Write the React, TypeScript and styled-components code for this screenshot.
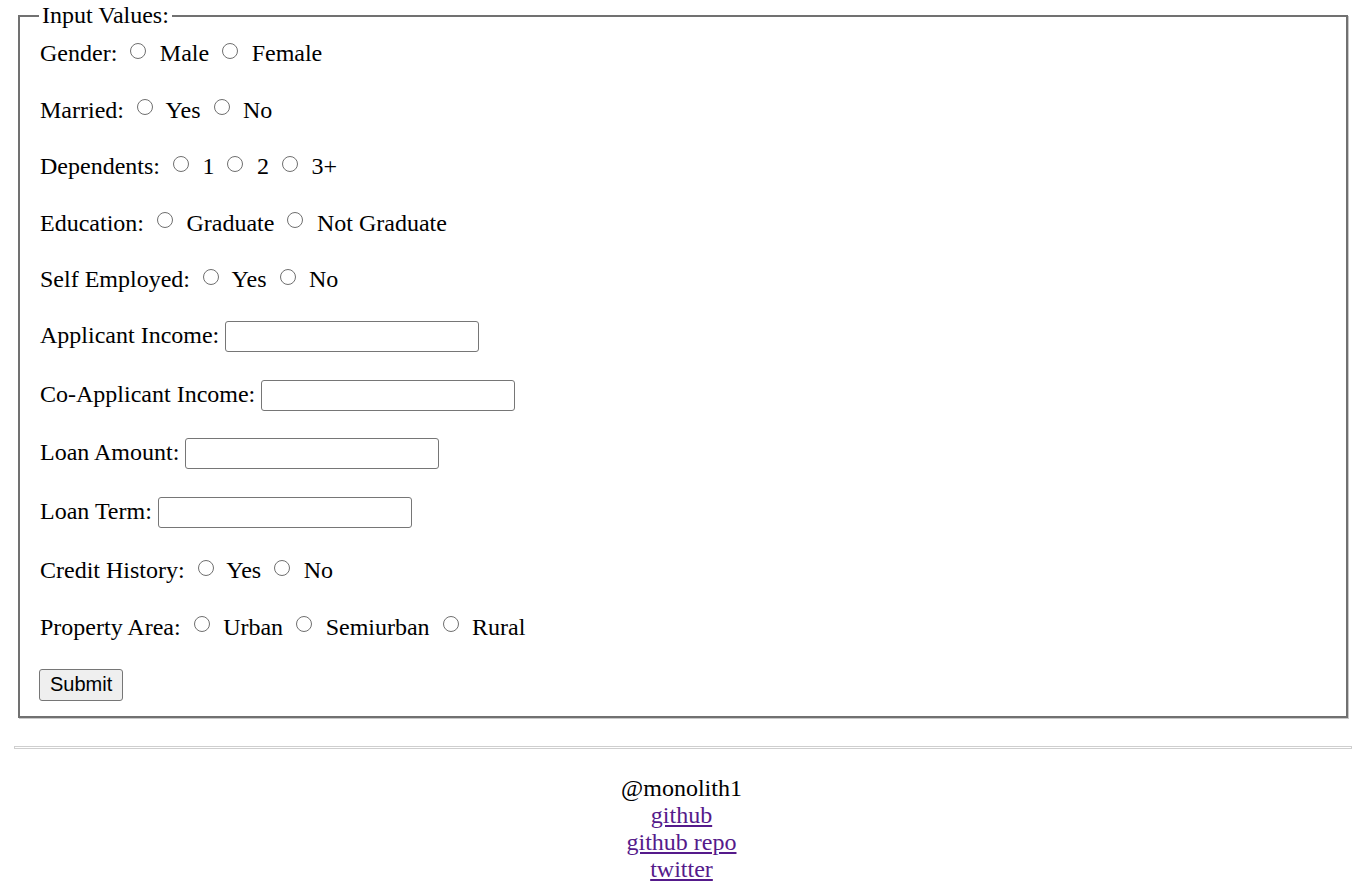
import React from "react";
import styled, { createGlobalStyle } from "styled-components";

const GlobalStyle = createGlobalStyle`
  html, body { background: #ffffff; }
  body {
    margin: 0;
    font-family: "Liberation Serif", "Times New Roman", serif;
    font-size: 24px;
    color: #000000;
  }
`;

const Page = styled.div`
  padding-top: 2px;
`;

const Form = styled.form`
  margin: 0;
`;

const FieldSet = styled.fieldset`
  margin: 0 15px 0 18px;
  padding: 9px 18px 15px 20px;
  border: 2px solid #717171;
  box-shadow: 1px 1px 0 #c9c9c9;
  min-inline-size: 0;
`;

const Legend = styled.legend`
  padding: 0 3px;
  margin-left: -1px;
  font-size: 24px;
`;

const Row = styled.div<{ $last?: boolean }>`
  line-height: normal;
  margin-bottom: ${(p) => (p.$last ? "0" : "27.6px")};
  white-space: nowrap;
`;

const Radio = styled.input.attrs({ type: "radio" })`
  appearance: none;
  -webkit-appearance: none;
  box-sizing: border-box;
  width: 16px;
  height: 16px;
  margin: 4.5px 7.5px 2.5px 7px;
  border: 1px solid #6f6f6f;
  border-radius: 50%;
  background: #ffffff;
  vertical-align: baseline;
`;

const TextInput = styled.input.attrs({ type: "text" })`
  box-sizing: border-box;
  width: 254px;
  height: 31px;
  margin: 0;
  padding: 1px 3px;
  border: 1px solid #767676;
  border-radius: 3px;
  font-family: "Liberation Sans", Arial, sans-serif;
  font-size: 20px;
  background: #ffffff;
  vertical-align: baseline;
`;

const SubmitButton = styled.button`
  box-sizing: border-box;
  height: 32px;
  margin: 0 0 0 -1px;
  padding: 0 10px;
  border: 1px solid #767676;
  border-radius: 3px;
  background: #efefef;
  color: #000000;
  font-family: "Liberation Sans", Arial, sans-serif;
  font-size: 20px;
  vertical-align: baseline;
`;

const Divider = styled.hr`
  margin: 28px 11px 0 14px;
  height: 1px;
  border: 1px solid #cfcfcf;
  background: #ffffff;
`;

const Footer = styled.div`
  margin-top: 26px;
  text-align: center;
  line-height: normal;
`;

const Handle = styled.div``;

const FooterLink = styled.a`
  display: block;
  width: fit-content;
  margin: 0 auto;
  color: #551a8b;
  text-decoration: underline;
`;

type RadioRow = { label: string; name: string; options: string[] };

const RadioField: React.FC<RadioRow> = ({ label, name, options }) => (
  <Row>
    {label}:{" "}
    {options.map((o, i) => (
      <React.Fragment key={o}>
        <Radio name={name} value={o} /> {o}
        {i < options.length - 1 ? " " : ""}
      </React.Fragment>
    ))}
  </Row>
);

const TextField: React.FC<{ label: string; name: string }> = ({ label, name }) => (
  <Row>
    {label}: <TextInput name={name} />
  </Row>
);

export default function App() {
  return (
    <Page>
      <GlobalStyle />
      <Form onSubmit={(e) => e.preventDefault()}>
        <FieldSet>
          <Legend>Input Values:</Legend>
          <RadioField label="Gender" name="gender" options={["Male", "Female"]} />
          <RadioField label="Married" name="married" options={["Yes", "No"]} />
          <RadioField label="Dependents" name="dependents" options={["1", "2", "3+"]} />
          <RadioField label="Education" name="education" options={["Graduate", "Not Graduate"]} />
          <RadioField label="Self Employed" name="self" options={["Yes", "No"]} />
          <TextField label="Applicant Income" name="ai" />
          <TextField label="Co-Applicant Income" name="cai" />
          <TextField label="Loan Amount" name="la" />
          <TextField label="Loan Term" name="lt" />
          <RadioField label="Credit History" name="credit" options={["Yes", "No"]} />
          <RadioField label="Property Area" name="area" options={["Urban", "Semiurban", "Rural"]} />
          <Row $last>
            <SubmitButton type="submit">Submit</SubmitButton>
          </Row>
        </FieldSet>
      </Form>
      <Divider />
      <Footer>
        <Handle>@monolith1</Handle>
        <FooterLink href="#github">github</FooterLink>
        <FooterLink href="#repo">github repo</FooterLink>
        <FooterLink href="#twitter">twitter</FooterLink>
      </Footer>
    </Page>
  );
}
